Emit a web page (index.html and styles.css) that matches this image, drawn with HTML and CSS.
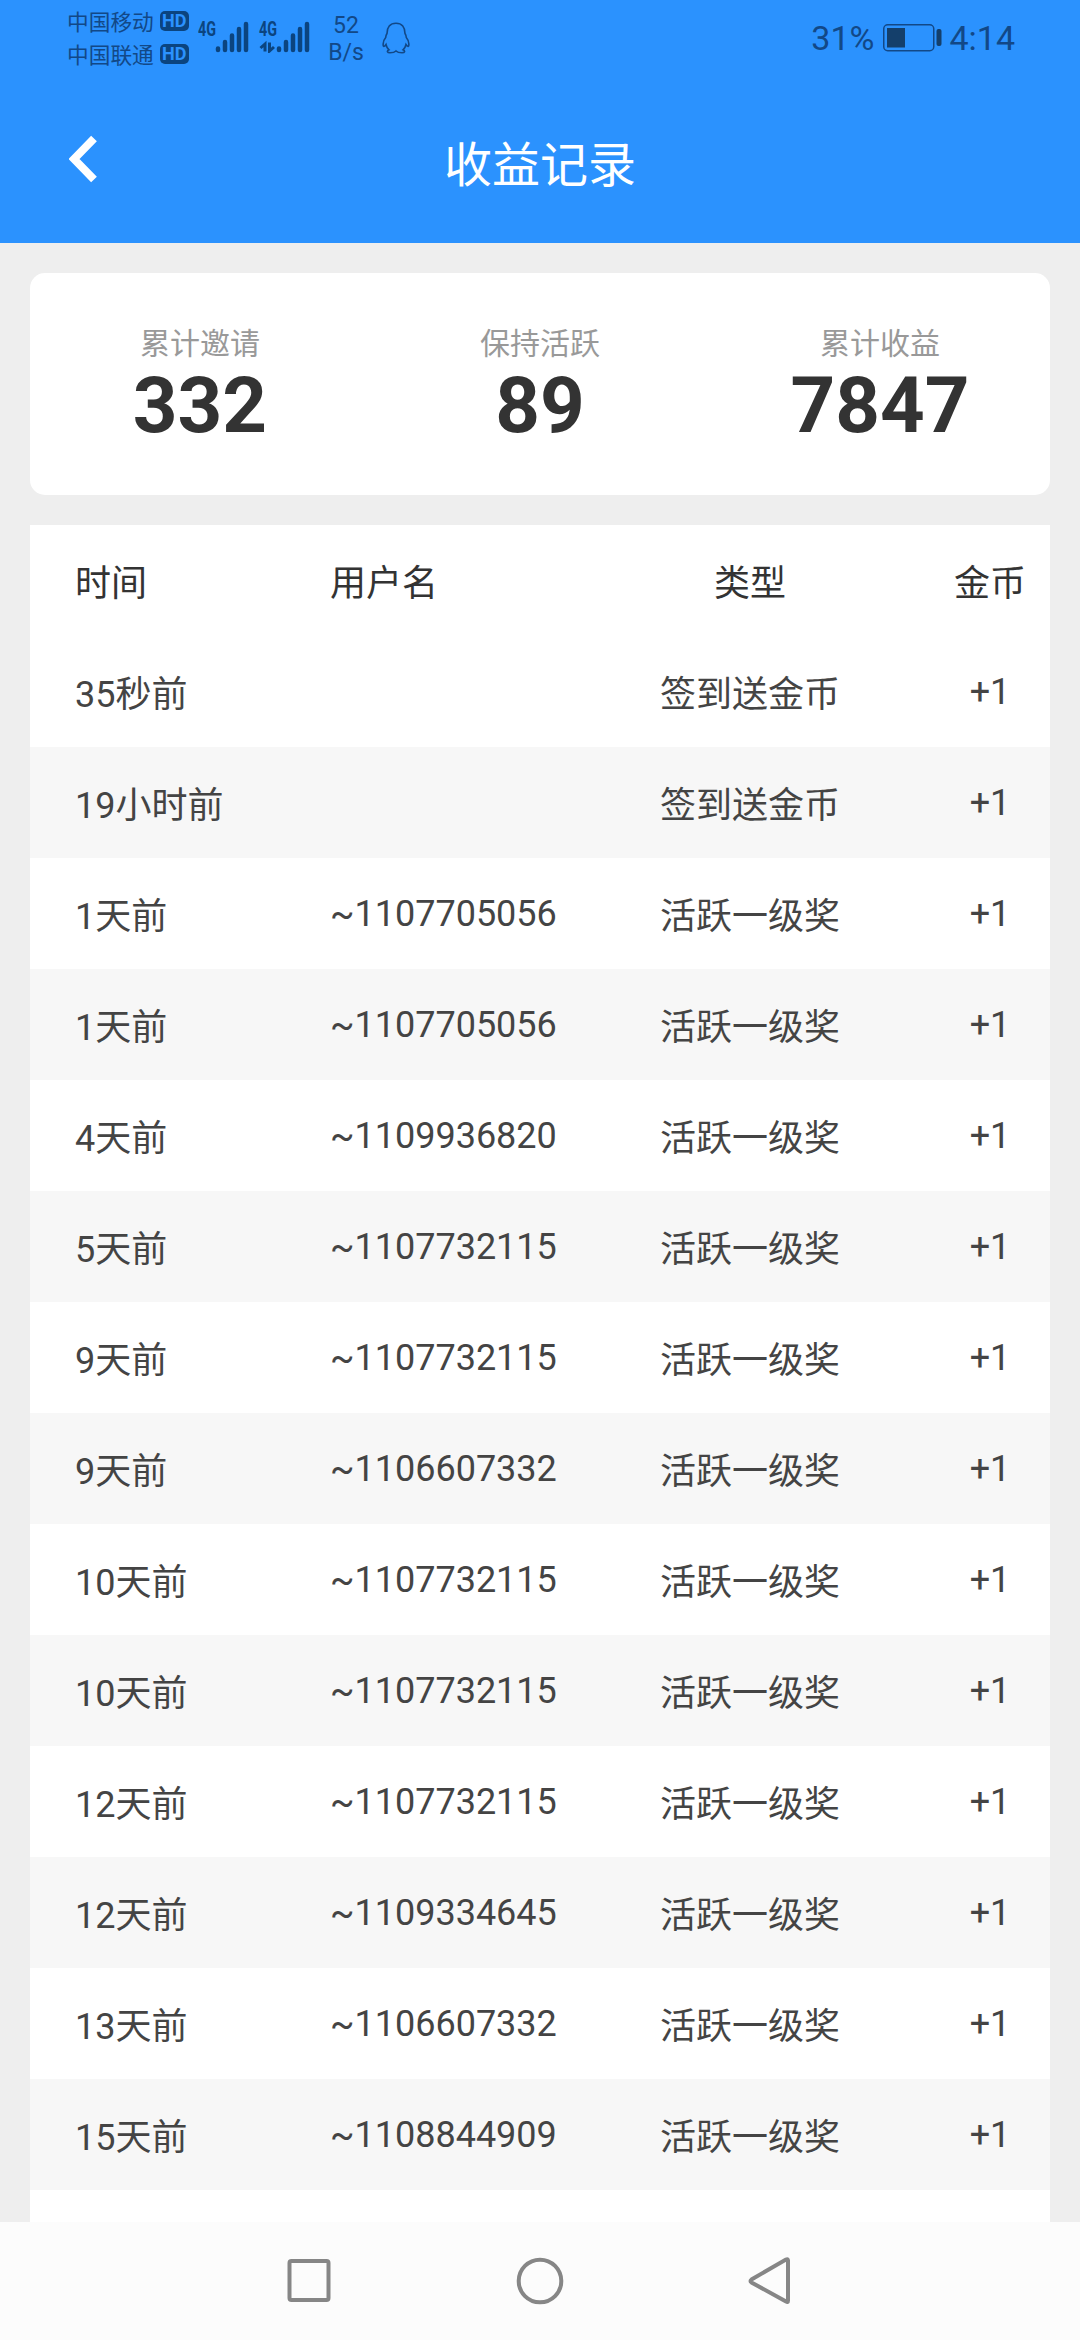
FILE: index.html
```html
<!DOCTYPE html>
<html lang="zh-CN">
<head>
<meta charset="utf-8">
<title>收益记录</title>
<link rel="stylesheet" href="styles.css">
</head>
<body>
<header class="top">
  <div class="status">
    <div class="carriers">
      <div class="carrier"><span>中国移动</span><b class="hd">HD</b></div>
      <div class="carrier"><span>中国联通</span><b class="hd">HD</b></div>
    </div>
    <svg class="signals" width="114" height="40" viewBox="0 -8 114 40">
      <g class="net"><text x="0" y="15" textLength="18" lengthAdjust="spacingAndGlyphs">4G</text><text x="61" y="15" textLength="18" lengthAdjust="spacingAndGlyphs">4G</text></g>
      <g class="bars">
        <path d="M20 27.500v1.500M27 21v8M34 14.500v14.500M41 8v21M48 3v26"/>
        <path d="M81 27.500v1.500M88 21v8M95 14.500v14.500M102 8v21M109 3v26"/>
      </g>
      <path class="arrows" d="M67 30.500V23L62.500 27M71.500 21.500v8.500l4.500-4"/>
    </svg>
    <div class="speed"><span>52</span><span>B/s</span></div>
    <svg class="qq" width="28" height="32" viewBox="0 0 28 32"><path d="M14 1.200C8 1.200 5 5.500 5 11.500C4 13 3.700 14 3.700 15.500C1.500 18 .8 21 1.300 24C1.800 25 3 24 4 22.500C4.500 25 5.500 26.500 7 27.800C4.500 29 5 30.800 8 30.800C11 30.800 13 30 14 29C15 30 17 30.800 20 30.800C23 30.800 23.500 29 21 27.800C22.500 26.500 23.500 25 24 22.500C25 24 26.200 25 26.700 24C27.200 21 26.500 18 24.300 15.500C24.300 14 24 13 23 11.500C23 5.500 20 1.200 14 1.200Z"/></svg>
    <div class="right">
      <span class="pct">31%</span>
      <svg width="59" height="28" viewBox="0 0 59 28"><rect class="shell" x=".75" y=".75" width="50" height="26" rx="4"/><rect class="fill" x="4" y="4" width="18" height="19.500"/><rect class="fill" x="53.500" y="5" width="5" height="17" rx="2"/></svg>
      <span class="clock">4:14</span>
    </div>
  </div>
  <nav class="bar">
    <svg class="back" width="30" height="48" viewBox="0 0 30 48"><path d="M25 3.500L5 24L25 44.500"/></svg>
    <h1>收益记录</h1>
  </nav>
</header>
<main class="page">
  <section class="summary">
    <div><p>累计邀请</p><strong>332</strong></div>
    <div><p>保持活跃</p><strong>89</strong></div>
    <div><p>累计收益</p><strong>7847</strong></div>
  </section>
  <section class="records">
    <div class="row head"><span>时间</span><span>用户名</span><span>类型</span><span>金币</span></div>
    <div class="row"><span>35秒前</span><span></span><span>签到送金币</span><span>+1</span></div>
    <div class="row"><span>19小时前</span><span></span><span>签到送金币</span><span>+1</span></div>
    <div class="row"><span>1天前</span><span>~1107705056</span><span>活跃一级奖</span><span>+1</span></div>
    <div class="row"><span>1天前</span><span>~1107705056</span><span>活跃一级奖</span><span>+1</span></div>
    <div class="row"><span>4天前</span><span>~1109936820</span><span>活跃一级奖</span><span>+1</span></div>
    <div class="row"><span>5天前</span><span>~1107732115</span><span>活跃一级奖</span><span>+1</span></div>
    <div class="row"><span>9天前</span><span>~1107732115</span><span>活跃一级奖</span><span>+1</span></div>
    <div class="row"><span>9天前</span><span>~1106607332</span><span>活跃一级奖</span><span>+1</span></div>
    <div class="row"><span>10天前</span><span>~1107732115</span><span>活跃一级奖</span><span>+1</span></div>
    <div class="row"><span>10天前</span><span>~1107732115</span><span>活跃一级奖</span><span>+1</span></div>
    <div class="row"><span>12天前</span><span>~1107732115</span><span>活跃一级奖</span><span>+1</span></div>
    <div class="row"><span>12天前</span><span>~1109334645</span><span>活跃一级奖</span><span>+1</span></div>
    <div class="row"><span>13天前</span><span>~1106607332</span><span>活跃一级奖</span><span>+1</span></div>
    <div class="row"><span>15天前</span><span>~1108844909</span><span>活跃一级奖</span><span>+1</span></div>
  </section>
</main>
<footer class="keys">
  <svg width="48" height="50" viewBox="0 0 48 50"><rect x="4.500" y="5" width="39" height="39" rx="2"/></svg>
  <svg width="48" height="50" viewBox="0 0 48 50"><circle cx="24" cy="25" r="21.300"/></svg>
  <svg width="48" height="50" viewBox="0 0 48 50"><path d="M41 4.500V44.500Q41 47 39 45.500L4.500 26.500Q2.500 25 4.500 23.500L39 3.500Q41 2.500 41 4.500Z"/></svg>
</footer>
</body>
</html>
```
FILE: styles.css
```css
* { box-sizing: border-box; margin: 0; padding: 0; }
body {
  width: 1080px; height: 2340px; overflow: hidden;
  display: flex; flex-direction: column;
  background: #eee; color: #333;
  font-family: Roboto, "Noto Sans CJK SC", sans-serif;
}
svg { display: block; flex: none; fill: none; }

.top { height: 243px; flex: none; background: #2b92fe; }
.status { display: flex; height: 75px; padding-left: 67px; color: #124887; }
.carriers { width: 131px; padding-top: 4px; }
.carrier { display: flex; align-items: center; gap: 6px; height: 33px; font-size: 21.700px; }
.hd {
  width: 29px; height: 20px; border-radius: 5px;
  background: #0b447f; color: #2b92fe;
  font-size: 18px; line-height: 20px; text-align: center;
}
.signals { margin-top: 13px; }
.net { fill: #0b447f; font-size: 20px; font-weight: 700; }
.bars { stroke: #0b447f; stroke-width: 4.500; stroke-linecap: round; }
.arrows { stroke: #0b447f; stroke-width: 3; }
.speed {
  display: flex; flex-direction: column; width: 68px; padding-top: 12px;
  font-size: 23px; line-height: 27px; text-align: center;
}
.qq { margin: 22px 0 0 2px; stroke: #124887; stroke-width: 1.600; }
.right { display: flex; align-items: center; margin-left: auto; padding-right: 65px; font-size: 34px; }
.right svg { margin: 0 7px 0 9px; }
.shell { stroke: #124887; stroke-width: 1.500; }
.fill { fill: #143f6b; }

.bar { position: relative; display: flex; align-items: center; justify-content: center; height: 168px; }
.back { position: absolute; left: 69px; top: 60px; stroke: #fff; stroke-width: 8; }
.bar h1 { color: #fff; font-size: 48px; font-weight: 400; line-height: 70px; padding-top: 14px; }

.page { flex: 1; min-height: 0; overflow: hidden; padding: 30px 30px 0; }
.summary {
  display: grid; grid-template-columns: repeat(3, 1fr);
  height: 222px; padding-top: 48px; border-radius: 15px;
  background: #fff; text-align: center;
}
.summary p { color: #999; font-size: 30px; line-height: 45px; }
.summary strong { display: block; font-size: 78px; line-height: 80px; }

.records { margin-top: 30px; height: 1800px; background: #fff; }
.row {
  display: grid; grid-template-columns: 255px 300px 330px 135px; align-items: center;
  height: 111px; color: #444; font-size: 36px; line-height: 54px;
}
.row:nth-child(odd):not(.head) { background: #f7f7f7; }
.head { color: #333; }
/* Cells holding Chinese text sit slightly lower than purely numeric ones. */
.row span:nth-child(odd), .head span { padding-top: 7px; }
.row span:nth-child(1) { padding-left: 45px; }
.row span:nth-child(2) { padding-left: 45px; }
.row span:nth-child(3) { text-align: center; }
.row span:nth-child(4) { padding-left: 15px; text-align: center; }

.keys {
  display: flex; align-items: center; justify-content: center; gap: 183px;
  height: 118px; flex: none; background: #fcfcfc;
}
.keys svg { stroke: #868686; stroke-width: 4; }
```
